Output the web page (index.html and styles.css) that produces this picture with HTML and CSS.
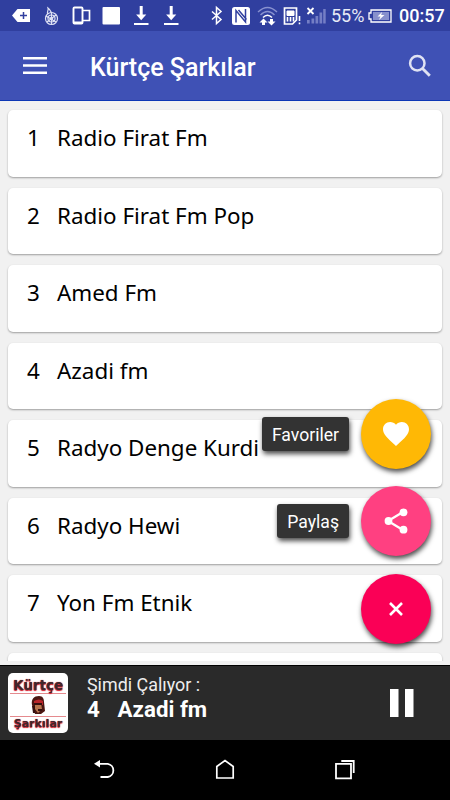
FILE: index.html
```html
<!DOCTYPE html>
<html lang="tr">
<head>
    <meta charset="UTF-8">
    <meta name="viewport" content="width=device-width, initial-scale=1.0">
    <title>Kürtçe Şarkılar</title>
    <link rel="stylesheet" href="styles.css">
</head>
<body>
    <div class="app">
        <div class="status-bar">
            <div class="notifications">
                <svg viewBox="0 0 30 31"><path d="M6 15.5 11.5 9H24v13H11.5z" fill="#fff"/><path d="M14 15.5h7M17.500 12v7" stroke="#303f9f" stroke-width="1.500"/></svg>
                <svg viewBox="0 0 30 31" fill="none" stroke="#dfe2f4" stroke-width="1.200"><circle cx="15.500" cy="18.500" r="6"/><circle cx="15.500" cy="18.500" r="3.500"/><circle cx="15.500" cy="18.500" r="1.200"/><path d="M12 14c-2-2 1-3 0-6 3 2 2 4 4 5M10 16l10 6M20 15l-9 7M15.500 12.500v12"/></svg>
                <svg viewBox="0 0 30 31" fill="none" stroke="#fff"><rect x="7.500" y="7.500" width="9" height="16" rx="1" stroke-width="1.900"/><path d="M8 22.500h8" stroke-width="2"/><path d="M17 10.500h6.500v10H17" stroke-width="1.700"/></svg>
                <svg viewBox="0 0 30 31"><rect x="6.500" y="7" width="17.500" height="17.500" rx="1" fill="#fff"/></svg>
                <svg viewBox="0 0 30 31" fill="#fff"><path d="M13.700 6h3v8.500h3.600l-5.100 5.800-5.100-5.800h3.600zM8 23h14.500v2H8z"/></svg>
                <svg viewBox="0 0 30 31" fill="#fff"><path d="M13.700 6h3v8.500h3.600l-5.100 5.800-5.100-5.800h3.600zM8 23h14.500v2H8z"/></svg>
            </div>
            <div class="system">
                <svg viewBox="0 0 25 31" fill="none" stroke="#fff" stroke-width="1.500"><path d="m7 11.500 9 8-4.500 4V7.500l4.500 4-9 8"/></svg>
                <svg viewBox="0 0 25 31"><rect x="2" y="7" width="18" height="18" rx="2.500" fill="#fff"/><path d="M6 22.500V10.500l9.500 11.500V9M8.500 10l8 9.500" fill="none" stroke="#303f9f" stroke-width="1.500"/></svg>
                <svg viewBox="0 0 25 31" fill="none"><path d="M3 12q9.500-9 19 0M5.500 15q7-7 14 0" stroke="#8891cf" stroke-width="1.400"/><path d="M8 17.500q4.500-4.500 9 0" stroke="#fff" stroke-width="1.500"/><path d="m8.500 18.500-4 4H7V25h3v-2.500h2.500zM16.500 25.500l-4-4h2.500V19h3v2.500h2.500z" fill="#fff"/></svg>
                <svg viewBox="0 0 25 31" fill="none" stroke="#fff"><path d="M4.500 8h12v12l-4 4h-8z" stroke-width="1.700"/><path d="M7 11h7v4.500H7z" fill="#fff"/><path d="M7.500 17v4.500M10.500 17v4.500M13.500 17v4.500M19.500 16v5M19.500 22.500v1.700" stroke-width="1.600"/></svg>
                <svg viewBox="0 0 25 31"><path d="M2 20h2.700v3.500H2zM6.500 18.500h2.700v5H6.500zM10.500 16h2.700v7.500h-2.700zM14.500 12.500h2.700v11h-2.700zM18.200 9h2.500v14.500h-2.500z" fill="#747ec5"/><path d="m2.500 8 6 6M8.500 8l-6 6" stroke="#fff" stroke-width="1.800"/></svg>
                <span class="percent">55%</span>
                <svg class="battery" viewBox="0 0 25 31"><path d="M4 10h20v12H4v-3H2v-6h2z" fill="#303f9f" stroke="#fff" stroke-width="1.300"/><path d="M6 12h16v8H6z" fill="#8790cd"/><path d="m15 12-4.500 4.500h3L12 20l5.500-5h-3.300z" fill="#fff"/></svg>
                <span class="clock">00:57</span>
            </div>
        </div>

        <header class="toolbar">
            <svg class="menu-icon" viewBox="0 0 24 18" fill="#fff"><path d="M0 0h24v2.600H0zM0 7.200h24v2.600H0zM0 14.400h24V17H0z"/></svg>
            <h1>Kürtçe Şarkılar</h1>
            <svg class="search-icon" viewBox="0 0 24 24" fill="none" stroke="#dfe2f3"><circle cx="9.300" cy="9.300" r="7.200" stroke-width="2.500"/><path d="m14.500 14.500 7.300 7.300" stroke-width="2.900"/></svg>
        </header>

        <main class="list">
            <div class="card"><span class="num">1</span>Radio Firat Fm</div>
            <div class="card"><span class="num">2</span>Radio Firat Fm Pop</div>
            <div class="card"><span class="num">3</span>Amed Fm</div>
            <div class="card"><span class="num">4</span>Azadi fm</div>
            <div class="card"><span class="num">5</span>Radyo Denge Kurdi</div>
            <div class="card"><span class="num">6</span>Radyo Hewi</div>
            <div class="card"><span class="num">7</span>Yon Fm Etnik</div>
            <div class="card"></div>
        </main>

        <div class="player">
            <div class="cover">
                <span class="cover-top">Kürtçe</span>
                <svg viewBox="0 0 16 20"><path d="M2 10C1 4 4 1 9 1c4 0 5 3 5 6l1 9-4 3H5z" fill="#4b1712"/><path d="M4 6q5-3 9 0v4H4z" fill="#b9262b"/><path d="M5 8h6l1 6-4 4-3-4z" fill="#b8744d"/><path d="M4 8h8v2H4zM2 11h3v7H3zM8 14h4v2H8z" fill="#35100f"/></svg>
                <span class="cover-bottom">Şarkılar</span>
            </div>
            <div class="now-playing">
                <p class="label">Şimdi Çalıyor :</p>
                <p class="track"><span>4</span>Azadi fm</p>
            </div>
            <svg class="pause" viewBox="0 0 24 28" fill="#fff"><path d="M0 0h8.500v28H0zM15 0h8.500v28H15z"/></svg>
        </div>

        <nav class="nav-bar">
            <svg viewBox="0 0 24 24" fill="none" stroke="#fff" stroke-width="1.800"><path d="M5 5.800h9.800a6.700 6.700 0 0 1 0 13.200H7.500"/><path d="M1 5.700 7 2v7.500z" fill="#fff" stroke="none"/></svg>
            <svg viewBox="0 0 24 24" fill="none" stroke="#fff" stroke-width="1.700"><path d="M3.800 20V8.500L12 2.500l8.200 6V20z"/></svg>
            <svg viewBox="0 0 24 24" fill="none" stroke="#fff" stroke-width="1.800"><path d="M3 5.800h15v14.500H3zM8.300 3h12.400v12"/></svg>
        </nav>

        <!-- floating action menu -->
        <div class="fab-menu">
            <div class="fab-row">
                <span class="fab-label">Favoriler</span>
                <button class="fab yellow"><svg viewBox="2 3 20 18.350" width="26" height="24" fill="#fff"><path d="M12 21.350l-1.450-1.320C5.400 15.360 2 12.280 2 8.500 2 5.420 4.420 3 7.500 3c1.740 0 3.410.810 4.500 2.090C13.090 3.810 14.760 3 16.500 3 19.580 3 22 5.420 22 8.500c0 3.780-3.400 6.860-8.550 11.540L12 21.350z"/></svg></button>
            </div>
            <div class="fab-row">
                <span class="fab-label">Paylaş</span>
                <button class="fab pink"><svg viewBox="0 0 24 26" width="24" height="26" fill="#fff"><path d="m19 4-15 9 15 9" fill="none" stroke="#fff" stroke-width="2.300"/><circle cx="19.500" cy="4.300" r="3.900"/><circle cx="4.500" cy="13" r="3.900"/><circle cx="19.500" cy="21.700" r="3.900"/></svg></button>
            </div>
            <div class="fab-row">
                <button class="fab red"><svg viewBox="0 0 14 14" width="14" height="14" stroke="#fff" stroke-width="2.600"><path d="m1 1 12 12M13 1 1 13"/></svg></button>
            </div>
        </div>
    </div>
</body>
</html>
```
FILE: styles.css
```css
* {
    box-sizing: border-box;
}
body {
    margin: 0;
    font-family: Roboto, sans-serif;
    background: #000;
}
svg {
    display: block;
    flex-shrink: 0;
}
h1, p {
    margin: 0;
}
.app {
    position: relative;
    display: flex;
    flex-direction: column;
    width: 450px;
    height: 800px;
    overflow: hidden;
}
.status-bar {
    display: flex;
    justify-content: space-between;
    height: 31px;
    padding: 0 6px;
    background: #303f9f;
    color: #fff;
}
.notifications, .system {
    display: flex;
    align-items: center;
}
.notifications svg {
    width: 30px;
    height: 31px;
}
.system svg {
    width: 25px;
    height: 31px;
}
.percent {
    width: 37px;
    padding-left: 1px;
    font-size: 18px;
    line-height: 33px;
    color: #e8eaf6;
}
.system .battery {
    margin-right: 7px;
}
.clock {
    width: 45px;
    font-size: 18px;
    font-weight: 500;
    line-height: 33px;
    white-space: nowrap;
}
.toolbar {
    display: flex;
    align-items: center;
    height: 70px;
    padding: 0 18px 0 23px;
    background: #3f51b5;
    border-bottom: 1px solid #0d37b5;
    color: #fff;
}
.menu-icon {
    width: 24px;
    height: 18px;
}
.toolbar h1 {
    flex: 1;
    margin-left: 43px;
    padding-top: 4px;
    font-size: 25px;
    font-weight: 500;
}
.search-icon {
    width: 24px;
    height: 24px;
}
.list {
    display: flex;
    flex-direction: column;
    gap: 11px;
    height: 560px;
    padding: 9.400px 8px 0;
    overflow: hidden;
    background: #f1f1f1;
}
.card {
    flex-shrink: 0;
    display: flex;
    height: 66.500px;
    padding: 11px 19px;
    background: #fff;
    border-radius: 5px;
    box-shadow: 0 1px 2px rgba(0, 0, 0, 0.35);
    font-family: "Noto Sans", sans-serif;
    font-size: 22.400px;
    line-height: 34.500px;
    color: #000;
}
.num {
    width: 30px;
}
.player {
    display: flex;
    height: 79px;
    padding: 8px 36px 0 8px;
    background: #2a2a2a;
    border-top: 4px solid #f1f1f1;
    box-shadow: inset 0 1px #000;
}
.cover {
    display: flex;
    flex-direction: column;
    align-items: center;
    justify-content: space-between;
    width: 60px;
    height: 60px;
    padding: 4px 2px 2px;
    background: #fff;
    border-radius: 5px;
    font-family: "DejaVu Sans", sans-serif;
    font-weight: bold;
    color: #40262b;
    text-shadow: 0 0 1px #d01828, 0 1px 1px #d01828;
}
.cover span {
    width: 56px;
    text-align: center;
    white-space: nowrap;
}
.cover-top {
    font-size: 13.500px;
    line-height: 16px;
    border-bottom: 1px solid #e58a8e;
}
.cover-bottom {
    font-size: 11px;
    line-height: 14px;
    border-top: 1px solid #e58a8e;
}
.cover svg {
    width: 16px;
    height: 20px;
}
.now-playing {
    flex: 1;
    padding-left: 19px;
    color: #fff;
}
.label {
    font-size: 17.900px;
    line-height: 23px;
    color: #eee;
}
.track {
    font-size: 22.300px;
    font-weight: bold;
    line-height: 27px;
}
.track span {
    display: inline-block;
    width: 30.500px;
}
.pause {
    width: 24px;
    height: 28px;
    margin-top: 16px;
}
.nav-bar {
    display: flex;
    justify-content: center;
    gap: 96px;
    height: 60px;
    padding-top: 18px;
    background: #000;
}
.nav-bar svg {
    width: 24px;
    height: 24px;
}
.fab-menu {
    position: absolute;
    top: 399px;
    right: 19px;
    display: flex;
    flex-direction: column;
    gap: 17.300px;
}
.fab-row {
    display: flex;
    justify-content: flex-end;
    gap: 12px;
}
.fab-label {
    height: 34px;
    margin-top: 18px;
    padding: 0 10px;
    background: #333;
    border-radius: 3px;
    box-shadow: 1px 3px 5px rgba(0, 0, 0, 0.7);
    font-size: 17.600px;
    line-height: 36px;
    color: #fff;
}
.fab {
    display: flex;
    align-items: center;
    justify-content: center;
    width: 70px;
    height: 70px;
    padding: 0;
    border: none;
    border-radius: 50%;
    box-shadow: 1px 3px 5px rgba(0, 0, 0, 0.7);
}
.yellow {
    background: #ffb805;
}
.pink {
    background: #ff4081;
}
.red {
    background: #fa0056;
}
```
